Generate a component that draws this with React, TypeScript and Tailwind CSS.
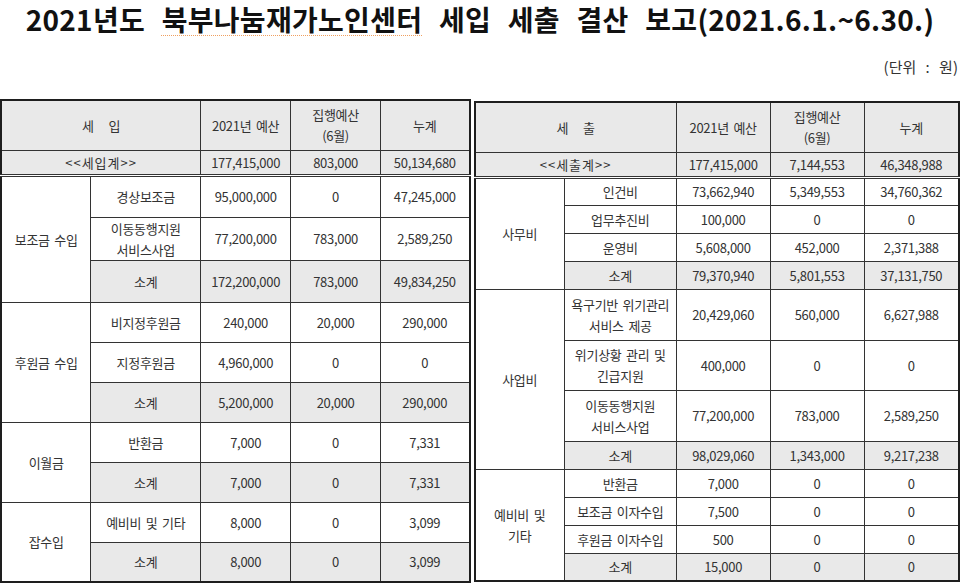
type Row = { label: string; v: [string, string, string]; h: number; sub?: boolean };
type Group = { name: string; rows: Row[] };

const incomeGroups: Group[] = [
  {
    name: "보조금 수입",
    rows: [
      { label: "경상보조금", v: ["95,000,000", "0", "47,245,000"], h: 42 },
      { label: "이동동행지원\n서비스사업", v: ["77,200,000", "783,000", "2,589,250"], h: 41 },
      { label: "소계", v: ["172,200,000", "783,000", "49,834,250"], h: 42, sub: true },
    ],
  },
  {
    name: "후원금 수입",
    rows: [
      { label: "비지정후원금", v: ["240,000", "20,000", "290,000"], h: 40 },
      { label: "지정후원금", v: ["4,960,000", "0", "0"], h: 40 },
      { label: "소계", v: ["5,200,000", "20,000", "290,000"], h: 40, sub: true },
    ],
  },
  {
    name: "이월금",
    rows: [
      { label: "반환금", v: ["7,000", "0", "7,331"], h: 40 },
      { label: "소계", v: ["7,000", "0", "7,331"], h: 40, sub: true },
    ],
  },
  {
    name: "잡수입",
    rows: [
      { label: "예비비 및 기타", v: ["8,000", "0", "3,099"], h: 40 },
      { label: "소계", v: ["8,000", "0", "3,099"], h: 40, sub: true },
    ],
  },
];

const expenseGroups: Group[] = [
  {
    name: "사무비",
    rows: [
      { label: "인건비", v: ["73,662,940", "5,349,553", "34,760,362"], h: 28 },
      { label: "업무추진비", v: ["100,000", "0", "0"], h: 28 },
      { label: "운영비", v: ["5,608,000", "452,000", "2,371,388"], h: 28 },
      { label: "소계", v: ["79,370,940", "5,801,553", "37,131,750"], h: 28, sub: true },
    ],
  },
  {
    name: "사업비",
    rows: [
      { label: "욕구기반 위기관리\n서비스 제공", v: ["20,429,060", "560,000", "6,627,988"], h: 51 },
      { label: "위기상황 관리 및\n긴급지원", v: ["400,000", "0", "0"], h: 50 },
      { label: "이동동행지원\n서비스사업", v: ["77,200,000", "783,000", "2,589,250"], h: 51 },
      { label: "소계", v: ["98,029,060", "1,343,000", "9,217,238"], h: 28, sub: true },
    ],
  },
  {
    name: "예비비 및\n기타",
    rows: [
      { label: "반환금", v: ["7,000", "0", "0"], h: 28 },
      { label: "보조금 이자수입", v: ["7,500", "0", "0"], h: 28 },
      { label: "후원금 이자수입", v: ["500", "0", "0"], h: 28 },
      { label: "소계", v: ["15,000", "0", "0"], h: 28, sub: true },
    ],
  },
];

const cell =
  "border border-[#333] text-center align-middle p-0 whitespace-pre-line leading-[21px] [word-spacing:2px]";

function Ledger({
  title,
  totalLabel,
  total,
  groups,
  widths,
}: {
  title: [string, string];
  totalLabel: string;
  total: [string, string, string];
  groups: Group[];
  widths: number[];
}) {
  return (
    <table className="table-fixed border-collapse border-2 border-[#1e1e1e] text-[13px] text-[#333] tracking-[-0.3px]">
      <colgroup>
        {widths.map((w, i) => (
          <col key={i} style={{ width: w }} />
        ))}
      </colgroup>
      <thead>
        <tr className="h-[50px] bg-[#e9e9e9]">
          <th colSpan={2} className={`${cell} font-normal`}>
            <span className="inline-flex gap-[15px]">
              <span>{title[0]}</span>
              <span>{title[1]}</span>
            </span>
          </th>
          <th className={`${cell} font-normal`}>2021년 예산</th>
          <th className={`${cell} font-normal`}>{"집행예산\n(6월)"}</th>
          <th className={`${cell} font-normal`}>누계</th>
        </tr>
        <tr className="h-[25px] bg-[#e9e9e9]">
          <td colSpan={2} className={`${cell} border-b-[3px] border-double`}>
            <span className="tracking-[1px]">{totalLabel}</span>
          </td>
          {total.map((t, i) => (
            <td key={i} className={`${cell} border-b-[3px] border-double`}>
              {t}
            </td>
          ))}
        </tr>
      </thead>
      <tbody>
        {groups.map((g) =>
          g.rows.map((r, i) => (
            <tr key={g.name + i} style={{ height: r.h }}>
              {i === 0 && (
                <td rowSpan={g.rows.length} className={`${cell} bg-white`}>
                  {g.name}
                </td>
              )}
              <td className={`${cell} ${r.sub ? "bg-[#e9e9e9]" : "bg-white"}`}>{r.label}</td>
              {r.v.map((v, j) => (
                <td key={j} className={`${cell} ${r.sub ? "bg-[#e9e9e9]" : "bg-white"}`}>
                  {v}
                </td>
              ))}
            </tr>
          ))
        )}
      </tbody>
    </table>
  );
}

export default function App() {
  return (
    <div
      className="w-[960px] h-[585px] bg-white overflow-hidden text-[#111]"
      style={{ fontFamily: '"Noto Sans CJK KR", "Noto Sans", sans-serif' }}
    >
      <h1 className="text-center text-[28px] font-bold leading-[38px] tracking-[0.3px] [word-spacing:10px] whitespace-nowrap">
        2021년도{" "}
        <span className="underline decoration-dotted decoration-[#f0a060] underline-offset-[4px] decoration-1">
          북부나눔재가노인센터
        </span>{" "}
        세입 세출 결산 보고(2021.6.1.~6.30.)
      </h1>
      <div className="mt-[19px] pr-[2px] text-right text-[15px] leading-[20px] text-[#333] [word-spacing:6px]">
        (단위 : 원)
      </div>
      <div className="mt-[22px] flex items-start gap-[3px]">
        <Ledger
          title={["세", "입"]}
          totalLabel="<<세입계>>"
          total={["177,415,000", "803,000", "50,134,680"]}
          groups={incomeGroups}
          widths={[90, 110, 90, 90, 89]}
        />
        <div className="mt-[2px]">
          <Ledger
            title={["세", "출"]}
            totalLabel="<<세출계>>"
            total={["177,415,000", "7,144,553", "46,348,988"]}
            groups={expenseGroups}
            widths={[90, 112, 94, 94, 95]}
          />
        </div>
      </div>
    </div>
  );
}
